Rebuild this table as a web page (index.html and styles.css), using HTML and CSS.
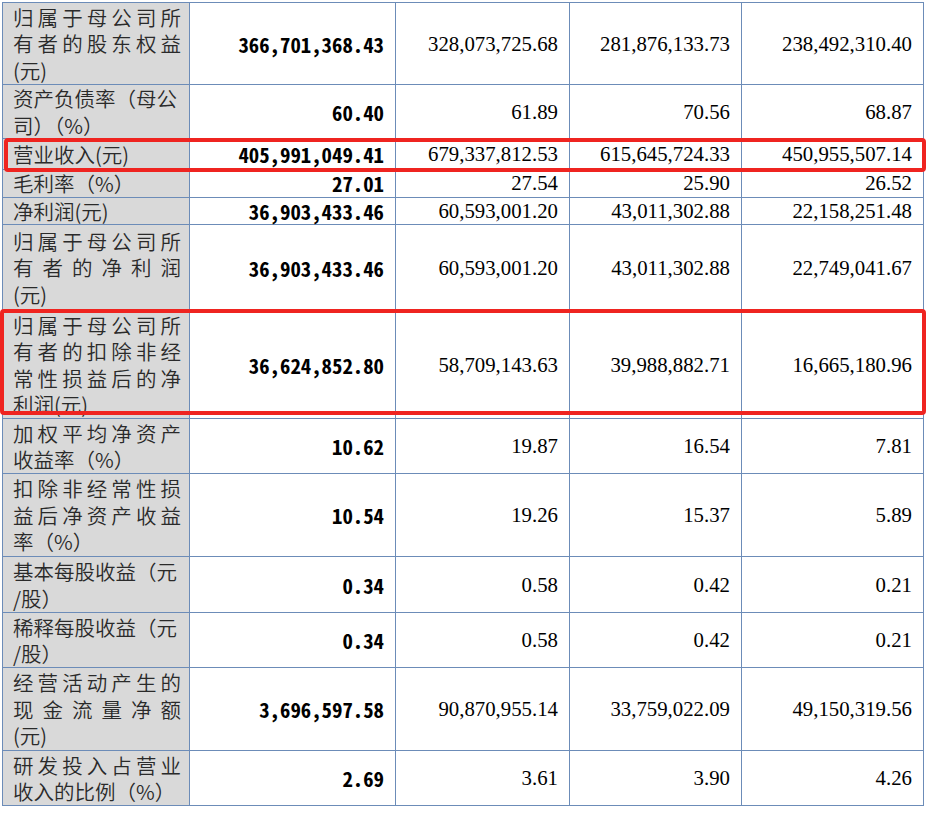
FILE: index.html
```html
<!DOCTYPE html>
<html lang="zh-CN">
<head>
<meta charset="utf-8">
<title>主要财务数据</title>
<link rel="stylesheet" href="styles.css">
</head>
<body>
<div class="sheet">
  <table class="fin">
    <colgroup>
      <col class="c-label"><col class="c-cur"><col class="c-y1"><col class="c-y2"><col class="c-y3">
    </colgroup>
    <tbody>
      <tr class="h82">
        <td class="lab"><span class="ln jl">归属于母公司所</span><span class="ln jl">有者的股东权益</span><span class="ln">(元)</span></td>
        <td class="cur">366,701,368.43</td><td class="num">328,073,725.68</td><td class="num">281,876,133.73</td><td class="num">238,492,310.40</td>
      </tr>
      <tr class="h54">
        <td class="lab"><span class="ln">资产负债率（母公</span><span class="ln">司）（%）</span></td>
        <td class="cur">60.40</td><td class="num">61.89</td><td class="num">70.56</td><td class="num">68.87</td>
      </tr>
      <tr class="h31">
        <td class="lab"><span class="ln">营业收入(元)</span></td>
        <td class="cur">405,991,049.41</td><td class="num">679,337,812.53</td><td class="num">615,645,724.33</td><td class="num">450,955,507.14</td>
      </tr>
      <tr class="h27">
        <td class="lab"><span class="ln">毛利率（%）</span></td>
        <td class="cur">27.01</td><td class="num">27.54</td><td class="num">25.90</td><td class="num">26.52</td>
      </tr>
      <tr class="h27">
        <td class="lab"><span class="ln">净利润(元)</span></td>
        <td class="cur">36,903,433.46</td><td class="num">60,593,001.20</td><td class="num">43,011,302.88</td><td class="num">22,158,251.48</td>
      </tr>
      <tr class="h86">
        <td class="lab"><span class="ln jl">归属于母公司所</span><span class="ln jl">有者的净利润</span><span class="ln">(元)</span></td>
        <td class="cur">36,903,433.46</td><td class="num">60,593,001.20</td><td class="num">43,011,302.88</td><td class="num">22,749,041.67</td>
      </tr>
      <tr class="h108">
        <td class="lab"><span class="ln jl">归属于母公司所</span><span class="ln jl">有者的扣除非经</span><span class="ln jl">常性损益后的净</span><span class="ln">利润(元)</span></td>
        <td class="cur">36,624,852.80</td><td class="num">58,709,143.63</td><td class="num">39,988,882.71</td><td class="num">16,665,180.96</td>
      </tr>
      <tr class="h55">
        <td class="lab"><span class="ln jl">加权平均净资产</span><span class="ln">收益率（%）</span></td>
        <td class="cur">10.62</td><td class="num">19.87</td><td class="num">16.54</td><td class="num">7.81</td>
      </tr>
      <tr class="h83">
        <td class="lab"><span class="ln jl">扣除非经常性损</span><span class="ln jl">益后净资产收益</span><span class="ln">率（%）</span></td>
        <td class="cur">10.54</td><td class="num">19.26</td><td class="num">15.37</td><td class="num">5.89</td>
      </tr>
      <tr class="h56">
        <td class="lab"><span class="ln">基本每股收益（元</span><span class="ln">/股）</span></td>
        <td class="cur">0.34</td><td class="num">0.58</td><td class="num">0.42</td><td class="num">0.21</td>
      </tr>
      <tr class="h55">
        <td class="lab"><span class="ln">稀释每股收益（元</span><span class="ln">/股）</span></td>
        <td class="cur">0.34</td><td class="num">0.58</td><td class="num">0.42</td><td class="num">0.21</td>
      </tr>
      <tr class="h83">
        <td class="lab"><span class="ln jl">经营活动产生的</span><span class="ln jl">现金流量净额</span><span class="ln">(元)</span></td>
        <td class="cur">3,696,597.58</td><td class="num">90,870,955.14</td><td class="num">33,759,022.09</td><td class="num">49,150,319.56</td>
      </tr>
      <tr class="h55">
        <td class="lab"><span class="ln jl">研发投入占营业</span><span class="ln">收入的比例（%）</span></td>
        <td class="cur">2.69</td><td class="num">3.61</td><td class="num">3.90</td><td class="num">4.26</td>
      </tr>
    </tbody>
  </table>
  <div class="mark mark-revenue"></div>
  <div class="mark mark-profit"></div>
</div>
</body>
</html>
```

FILE: styles.css
```css
html, body {
  margin: 0;
  padding: 0;
  background: #ffffff;
}

.sheet {
  position: relative;
  width: 930px;
  height: 813px;
  padding: 2px 0 0 2px;
  box-sizing: border-box;
}

.fin {
  border-collapse: collapse;
  table-layout: fixed;
  width: 922px;
}

.c-label { width: 187px; }
.c-cur { width: 206px; }
.c-y1 { width: 174px; }
.c-y2 { width: 172px; }
.c-y3 { width: 182px; }

.fin td {
  border: 1px solid #6c8cb8;
  padding: 0 11px 0 11px;
  vertical-align: middle;
  text-align: right;
  color: #000;
}

.fin td.lab {
  background: #d9d9d9;
  text-align: left;
  padding: 0 8px 0 10px;
  font-family: "Noto Sans CJK SC", sans-serif;
  font-weight: 350;
  font-size: 20.5px;
  line-height: 26.5px;
  color: #2a2a2a;
}

.ln {
  display: block;
  white-space: nowrap;
}

.ln.jl {
  text-align: justify;
  text-align-last: justify;
  white-space: normal;
}

.fin td.cur {
  font-family: "Noto Sans Mono CJK SC", "Noto Sans CJK SC", "DejaVu Sans Mono", monospace;
  font-feature-settings: "hwid" 1;
  font-weight: 700;
  font-size: 20.8px;
  line-height: 26px;
}

.fin td.num {
  font-family: "Liberation Serif", "Times New Roman", serif;
  font-size: 20.8px;
  line-height: 26px;
}

tr.h27 > td { height: 26px; }
tr.h31 > td { height: 30px; }
tr.h54 > td { height: 53px; }
tr.h55 > td { height: 54px; }
tr.h56 > td { height: 55px; }
tr.h82 > td { height: 81px; }
tr.h83 > td { height: 82px; }
tr.h86 > td { height: 85px; }
tr.h108 > td { height: 107px; }

.mark {
  position: absolute;
  border: 4px solid #ef2420;
  border-radius: 4px;
  box-sizing: border-box;
}

.mark-revenue {
  left: 4px;
  top: 138px;
  width: 922px;
  height: 34px;
}

.mark-profit {
  left: 0;
  top: 309px;
  width: 926px;
  height: 106px;
}
```
